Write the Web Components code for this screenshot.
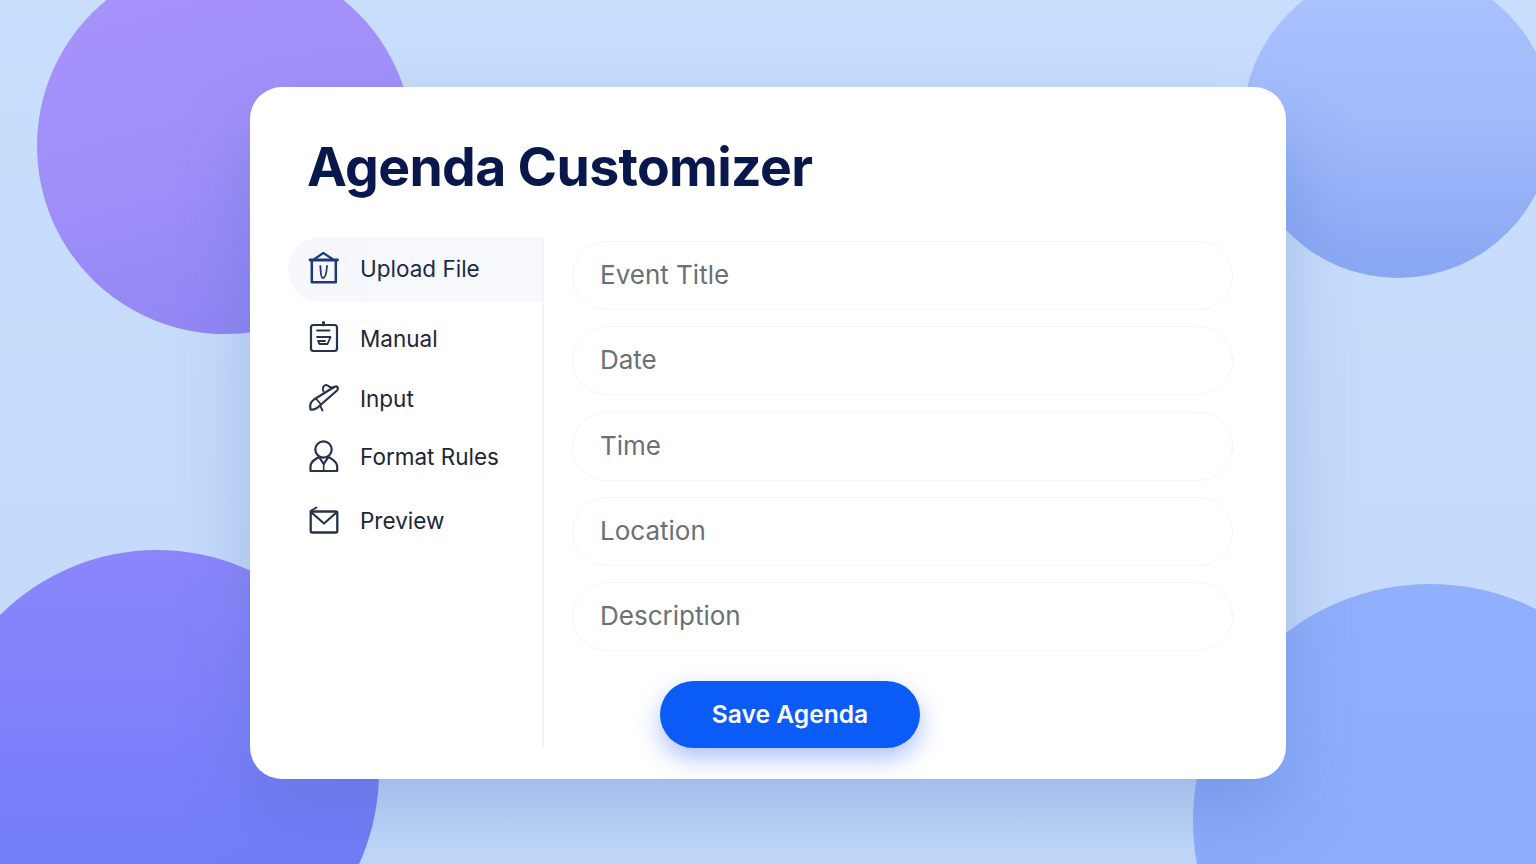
<!DOCTYPE html>
<html lang="en"><head><meta charset="utf-8"><title>Agenda Customizer</title>
<style>
html,body{margin:0;height:100%}
body{overflow:hidden;font-family:Inter,"Liberation Sans",sans-serif}
</style></head><body>
<agenda-stage>
  <agenda-card heading="Agenda Customizer">
    <nav-item slot="nav" active style="height:65px" icon="upload" top="253.5">Upload File</nav-item>
    <nav-item slot="nav" style="height:60px;margin-top:7px" icon="manual" top="323">Manual</nav-item>
    <nav-item slot="nav" style="height:60px" icon="input" top="383">Input</nav-item>
    <nav-item slot="nav" style="height:56px" icon="person" top="441">Format Rules</nav-item>
    <nav-item slot="nav" style="height:72px" icon="mail" top="505">Preview</nav-item>
    <text-field slot="fields">Event Title</text-field>
    <text-field slot="fields">Date</text-field>
    <text-field slot="fields">Time</text-field>
    <text-field slot="fields">Location</text-field>
    <text-field slot="fields">Description</text-field>
    <save-button slot="fields">Save Agenda</save-button>
  </agenda-card>
</agenda-stage>
<script>
const ICONS={
upload:`<path d="M310 259.5H337.5" stroke-width="2.8"/><path d="M314.5 258.5L323.3 252.5L332.5 258.5"/><path d="M311.8 260V281.8H335.8V260" stroke-width="2.5"/><path d="M320.3 265.5C321 271 320.3 277.5 323 277.5C326 277.5 326.6 271 327 265.5" stroke-width="1.8"/>`,
manual:`<rect x="311" y="325" width="26" height="26" rx="2.5"/><path d="M323.5 322.5V325" stroke-width="2.8"/><path d="M317 330.5H329.5M317 337H330.5L327.5 344H319.5L318 341H325" stroke-width="1.8"/>`,
input:`<path d="M310.5 409.5C309.3 404 311 402 314 399.5L334.5 386.8C337.5 385.3 339 388.5 337 390.5L320.5 405C317.5 408 314 410.5 310.5 409.5Z"/><path d="M316 398.5L321 404.5M320.5 406.5L322.5 410.5" stroke-width="1.8"/><path d="M323.5 391.5C321.5 387 325 383.8 327.5 385.5C329 387 331 387.5 333.5 387.8" stroke-width="1.8"/>`,
person:`<circle cx="323.5" cy="449.5" r="8.2"/><path d="M310.5 471V466.5C310.5 461 315.5 459.5 319 456.8L323.7 464L328.5 456.8C332 459.5 337.2 461 337.2 466.5V471Z"/><path d="M323.7 464V471" stroke-width="1.6"/>`,
mail:`<rect x="310.7" y="511.5" width="26.6" height="21" rx="1.5" stroke-width="2.3"/><path d="M311 512L324 523.5L337 512"/><path d="M310.5 511L316.5 507.5" stroke-width="1.9"/>`
};
function shadow(el,html){el.attachShadow({mode:"open"}).innerHTML=html}
customElements.define("agenda-stage",class extends HTMLElement{constructor(){super();shadow(this,`<style>
:host{display:block;position:relative;width:100%;height:100%;overflow:hidden;padding-top:87px;box-sizing:border-box;
background:linear-gradient(180deg,#c9defd,#c6dbfb 60%,#c3d9fa)}
.c{position:absolute;border-radius:50%}
.a{left:37px;top:-42px;width:376px;height:376px;background:linear-gradient(165deg,#ab93fb 0%,#9f8ff9 50%,#8d84f2 100%)}
.b{left:-65px;top:550px;width:444px;height:444px;background:linear-gradient(180deg,#8c86fb 0%,#7d80f9 40%,#667af6 100%)}
.d{left:1243px;top:-32px;width:310px;height:310px;background:linear-gradient(180deg,#abc3fd 0%,#a0bafb 50%,#88a7f3 100%)}
.e{left:1193px;top:584px;width:474px;height:474px;background:linear-gradient(180deg,#90b0fc 0%,#88aafa 100%)}
.w{position:relative}
</style><div class="c a"></div><div class="c b"></div><div class="c d"></div><div class="c e"></div><div class="w"><slot></slot></div>`)}});
customElements.define("agenda-card",class extends HTMLElement{constructor(){super();shadow(this,`<style>
:host{display:block;box-sizing:border-box;width:1036px;height:692px;margin:0 auto;background:#fff;border-radius:32px;padding:41px 53px 31px 38px;
box-shadow:0 34px 70px rgba(70,105,190,.3)}
h1{margin:0 0 0 19px;font:700 53.5px/78px Inter,"Liberation Sans",sans-serif;color:#08184c;letter-spacing:-.65px;height:109px}
.body{display:flex;height:511px}
nav{flex:none;border-right:2px solid #f3f4f7;box-sizing:border-box;width:256px}
.fields{flex:1;padding:4px 0 0 28px;display:flex;flex-direction:column}
</style><h1></h1><div class="body"><nav><slot name="nav"></slot></nav><div class="fields"><slot name="fields"></slot></div></div>`);
this.shadowRoot.querySelector("h1").textContent=this.getAttribute("heading")}});
customElements.define("nav-item",class extends HTMLElement{constructor(){super();shadow(this,`<style>
:host{display:flex;align-items:center;box-sizing:border-box;padding-left:20px;gap:20px;font:400 22.5px/1 Inter,"Liberation Sans",sans-serif;color:#1c2638}
:host([active]){background:linear-gradient(90deg,#f6f8fd,#f8f9fd);border-radius:32px 0 0 32px;color:#1b2a4a}
svg{width:32px;height:32px;flex:none;overflow:visible;fill:none;stroke:#27324a;stroke-width:2.2;stroke-linecap:round;stroke-linejoin:round}
:host([active]) svg{stroke:#1d3a7c}
</style><svg viewBox="308 ${this.getAttribute("top")} 32 32">${ICONS[this.getAttribute("icon")]}</svg><span><slot></slot></span>`)}});
customElements.define("text-field",class extends HTMLElement{constructor(){super();shadow(this,`<style>
:host{display:flex;align-items:center;box-sizing:border-box;height:69px;margin-bottom:16.3px;padding:0 0 1px 27px;border:1.5px solid #f4f5f7;border-radius:35px;background:#fff;
font:400 26px/1 Inter,"Liberation Sans",sans-serif;color:#6b6f76}
</style><slot></slot>`)}});
customElements.define("save-button",class extends HTMLElement{constructor(){super();shadow(this,`<style>
:host{display:flex;align-items:center;justify-content:center;width:260px;height:67px;margin:13.5px 0 0 88px;background:#0b5cf7;border-radius:34px;color:#fff;
font:600 24.6px/1 Inter,"Liberation Sans",sans-serif;box-shadow:0 10px 24px rgba(40,90,240,.38)}
</style><slot></slot>`)}});
</script>
</body></html>
